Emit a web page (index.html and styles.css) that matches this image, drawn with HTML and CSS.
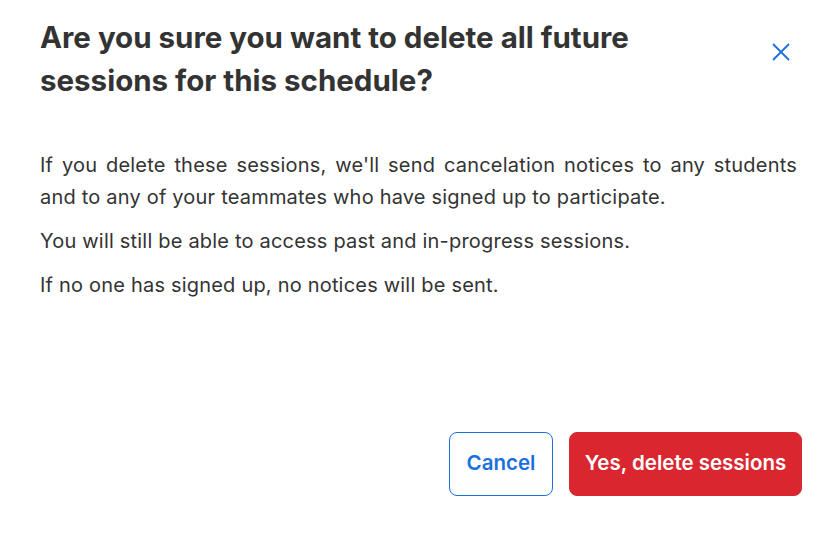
FILE: index.html
```html
<!DOCTYPE html>
<html>
<head>
<meta charset="utf-8">
<link rel="stylesheet" href="styles.css">
</head>
<body>
<div class="dialog">
  <div class="header">
    <h1 class="title">Are you sure you want to delete all future sessions for this schedule?</h1>
    <button class="close" aria-label="Close">
      <svg width="18" height="18" viewBox="0 0 18 18"><path d="M1 1 L17 17 M17 1 L1 17" stroke="#1a6fe0" stroke-width="1.8" fill="none"/></svg>
    </button>
  </div>
  <div class="body">
    <p class="justify">If you delete these sessions, we'll send cancelation notices to any students and to any of your teammates who have signed up to participate.</p>
    <p>You will still be able to access past and in-progress sessions.</p>
    <p>If no one has signed up, no notices will be sent.</p>
  </div>
  <div class="footer">
    <button class="btn btn-secondary">Cancel</button>
    <button class="btn btn-danger">Yes, delete sessions</button>
  </div>
</div>
</body>
</html>
```
FILE: styles.css
```css
* { box-sizing: border-box; }
html, body { margin: 0; padding: 0; background: #fff; }
body { font-family: Inter, "Noto Sans", sans-serif; color: #333; }
.dialog {
  width: 830px;
  height: 534px;
  padding: 16px 28px 38px 40px;
  display: flex;
  flex-direction: column;
}
.header {
  display: flex;
  align-items: flex-start;
  justify-content: space-between;
}
.title {
  margin: 0;
  font-size: 29.5px;
  line-height: 43px;
  font-weight: 700;
  color: #333;
  width: 640px;
}
.close {
  border: none;
  background: none;
  padding: 0;
  margin: 27px 12px 0 0;
  width: 18px;
  height: 18px;
  cursor: pointer;
}
.close svg { display: block; }
.body {
  margin-top: 47px;
  width: 757px;
  font-size: 20px;
  letter-spacing: 0.2px;
  line-height: 32px;
  color: #333;
}
.body p { margin: 0 0 12px 0; }
.justify { text-align: justify; }
.footer {
  margin-top: auto;
  display: flex;
  justify-content: flex-end;
  gap: 16px;
}
.btn {
  font-family: Inter, "Noto Sans", sans-serif;
  font-size: 20.5px;
  font-weight: 600;
  height: 64px;
  border-radius: 8px;
  padding: 0 0 3px 0;
  white-space: nowrap;
  cursor: pointer;
}
.btn-secondary {
  background: #fff;
  color: #1a6fe0;
  border: 1px solid #1a6fe0;
  width: 104px;
}
.btn-danger {
  background: #d9262f;
  color: #fff;
  border: 1px solid #d9262f;
  width: 233px;
}
```
